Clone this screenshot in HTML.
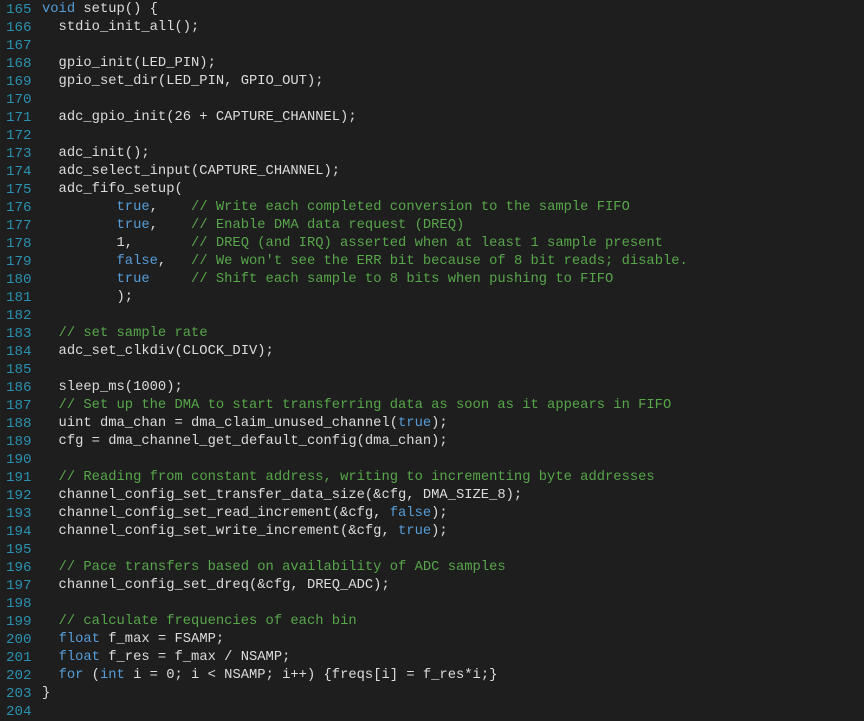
<!DOCTYPE html>
<html><head><meta charset="utf-8"><style>
html,body{margin:0;padding:0;background:#1e1e1e;width:864px;height:720px;overflow:hidden}
pre{margin:0;font-family:"Liberation Mono",monospace;font-size:13.8px;line-height:18px;color:#dcdcdc;white-space:pre;position:absolute;top:1px}
#n{left:6px;color:#2b91af;text-align:right;font-size:14.2px}
#c{left:42px}
.k{color:#569cd6}.c{color:#57a64a}
</style></head><body>
<pre id="n">165
166
167
168
169
170
171
172
173
174
175
176
177
178
179
180
181
182
183
184
185
186
187
188
189
190
191
192
193
194
195
196
197
198
199
200
201
202
203
204</pre>
<pre id="c"><span class="k">void</span> setup() {
  stdio_init_all();

  gpio_init(LED_PIN);
  gpio_set_dir(LED_PIN, GPIO_OUT);

  adc_gpio_init(26 + CAPTURE_CHANNEL);

  adc_init();
  adc_select_input(CAPTURE_CHANNEL);
  adc_fifo_setup(
         <span class="k">true</span>,    <span class="c">// Write each completed conversion to the sample FIFO</span>
         <span class="k">true</span>,    <span class="c">// Enable DMA data request (DREQ)</span>
         1,       <span class="c">// DREQ (and IRQ) asserted when at least 1 sample present</span>
         <span class="k">false</span>,   <span class="c">// We won't see the ERR bit because of 8 bit reads; disable.</span>
         <span class="k">true</span>     <span class="c">// Shift each sample to 8 bits when pushing to FIFO</span>
         );

  <span class="c">// set sample rate</span>
  adc_set_clkdiv(CLOCK_DIV);

  sleep_ms(1000);
  <span class="c">// Set up the DMA to start transferring data as soon as it appears in FIFO</span>
  uint dma_chan = dma_claim_unused_channel(<span class="k">true</span>);
  cfg = dma_channel_get_default_config(dma_chan);

  <span class="c">// Reading from constant address, writing to incrementing byte addresses</span>
  channel_config_set_transfer_data_size(&amp;cfg, DMA_SIZE_8);
  channel_config_set_read_increment(&amp;cfg, <span class="k">false</span>);
  channel_config_set_write_increment(&amp;cfg, <span class="k">true</span>);

  <span class="c">// Pace transfers based on availability of ADC samples</span>
  channel_config_set_dreq(&amp;cfg, DREQ_ADC);

  <span class="c">// calculate frequencies of each bin</span>
  <span class="k">float</span> f_max = FSAMP;
  <span class="k">float</span> f_res = f_max / NSAMP;
  <span class="k">for</span> (<span class="k">int</span> i = 0; i &lt; NSAMP; i++) {freqs[i] = f_res*i;}
}
</pre>
</body></html>
